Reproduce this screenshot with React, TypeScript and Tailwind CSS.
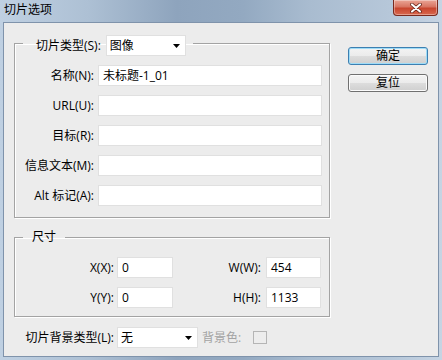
import React from "react";

const font = "font-['Open_Sans','Noto_Sans_CJK_SC',sans-serif]";

function Field({ value = "", className = "" }: { value?: string; className?: string }) {
  return (
    <div
      className={`flex h-[21px] items-center border border-[#e0e0e0] bg-white pl-[4px] text-[12px] text-black ${className}`}
    >
      {value}
    </div>
  );
}

function Select({ value, className = "" }: { value: string; className?: string }) {
  return (
    <div
      className={`flex h-[21px] items-center justify-between border border-[#e0e0e0] bg-white pl-[3px] pr-[5px] text-[12px] text-black ${className}`}
    >
      <span>{value}</span>
      <svg width="7" height="4" viewBox="0 0 7 4">
        <path d="M0 0H7L3.5 4Z" fill="#000" />
      </svg>
    </div>
  );
}

function Row({ label, value }: { label: string; value?: string }) {
  return (
    <div className="flex items-center">
      <span className="w-[79px] text-right">{label}</span>
      <Field value={value} className="ml-[4px] w-[224px]" />
    </div>
  );
}

function Button({ label, focused }: { label: string; focused?: boolean }) {
  return (
    <button
      type="button"
      className={`flex h-[18px] w-[80px] items-center justify-center rounded-[3px] border bg-[linear-gradient(#f3f3f3_0%,#ebebeb_50%,#dddddd_50%,#cfcfcf_100%)] text-[12px] leading-none text-black ${
        focused
          ? "border-[#3c7fb1] shadow-[inset_0_0_0_1px_#9fdcf7]"
          : "border-[#707070] shadow-[inset_0_0_0_1px_#fbfbfb]"
      }`}
    >
      {label}
    </button>
  );
}

export default function App() {
  return (
    <div
      className={`flex h-[360px] w-[442px] flex-col bg-[linear-gradient(90deg,#bfd0e2_0%,#adc0d4_20%,#8ea4bd_40%,#93a9c1_55%,#a9bcd0_70%,#b6c7d9_88%,#c6d4e3_100%)] text-[12px] leading-[16px] text-black ${font}`}
    >
      {/* Title bar */}
      <div className="flex h-[22px] items-start justify-between">
        <span className="pl-[4px] pt-[2px] text-[12px] text-black">切片选项</span>
        <div className="mr-[4px] flex h-[16px] w-[45px] items-center justify-center rounded-b-[4px] border border-t-0 border-[#7a2a1e] bg-[linear-gradient(#eaa596_0%,#d87562_45%,#c8452e_55%,#d9694f_100%)] shadow-[inset_0_0_0_1px_rgba(255,255,255,0.35)]">
          <svg width="12" height="10" viewBox="0 0 12 10">
            <path d="M2 1.5L10 8.5M10 1.5L2 8.5" stroke="#5a1a10" strokeWidth="3.6" strokeLinecap="round" />
            <path d="M2 1.5L10 8.5M10 1.5L2 8.5" stroke="#fff" strokeWidth="2.2" strokeLinecap="round" />
          </svg>
        </div>
      </div>

      {/* Client area */}
      <div className="mx-[3px] mb-[3px] flex flex-1 flex-col border border-[#7f93ab] bg-[#ececec]">
        <div className="flex pl-[10px] pt-[12px]">
          <div className="flex flex-col">
            {/* Slice group */}
            <fieldset className="h-[183px] w-[316px] border border-[#a3a3a3] shadow-[1px_1px_0_#fff,inset_1px_1px_0_#fff]">
              <legend className="ml-[8px] h-[16px] pl-[13px] pr-[7px]">
                <div className="flex h-[21px] items-center">
                  <span>切片类型(S):</span>
                  <Select value="图像" className="ml-[5px] w-[80px]" />
                </div>
              </legend>
              <div className="mt-[14px] flex flex-col gap-[9px]">
                <Row label="名称(N):" value="未标题-1_01" />
                <Row label="URL(U):" />
                <Row label="目标(R):" />
                <Row label="信息文本(M):" />
                <Row label="Alt 标记(A):" />
              </div>
            </fieldset>

            {/* Dimensions group */}
            <fieldset className="mt-[11px] h-[88px] w-[316px] border border-[#a3a3a3] shadow-[1px_1px_0_#fff,inset_1px_1px_0_#fff]">
              <legend className="ml-[8px] px-[9px] leading-[16px]">尺寸</legend>
              <div className="mt-[12px] flex flex-col gap-[9px]">
                <div className="flex items-center">
                  <span className="w-[99px] text-right">X(X):</span>
                  <Field value="0" className="ml-[3px] w-[56px]" />
                  <span className="w-[88px] text-right">W(W):</span>
                  <Field value="454" className="ml-[5px] w-[55px]" />
                </div>
                <div className="flex items-center">
                  <span className="w-[99px] text-right">Y(Y):</span>
                  <Field value="0" className="ml-[3px] w-[56px]" />
                  <span className="w-[88px] text-right">H(H):</span>
                  <Field value="1133" className="ml-[5px] w-[55px]" />
                </div>
              </div>
            </fieldset>
          </div>

          {/* Buttons */}
          <div className="ml-[18px] mt-[12px] flex flex-col gap-[9px]">
            <Button label="确定" focused />
            <Button label="复位" />
          </div>
        </div>

        {/* Background type */}
        <div className="mt-[10px] flex items-center pl-[13px]">
          <span className="w-[97px] text-right">切片背景类型(L):</span>
          <Select value="无" className="ml-[3px] w-[81px]" />
          <span className="ml-[4px] text-[#a3a3a3]">背景色:</span>
          <div className="ml-[12px] h-[13px] w-[14px] border border-[#b5b5b5] bg-[#ededed]" />
        </div>
      </div>
    </div>
  );
}
